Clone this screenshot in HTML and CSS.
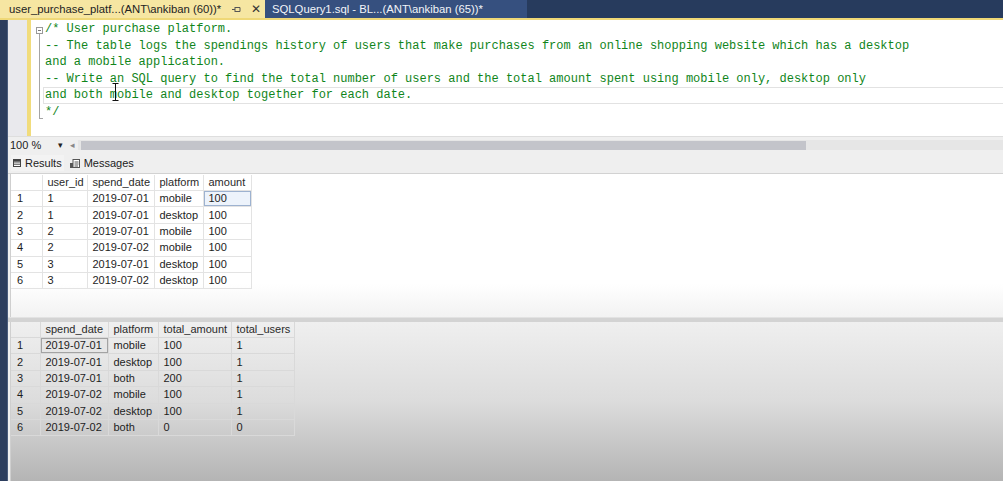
FILE: index.html
```html
<!DOCTYPE html>
<html>
<head>
<meta charset="utf-8">
<link rel="stylesheet" href="styles.css">
</head>
<body>
<div class="tabbar">
  <div class="tab tab-active">
    <span class="tab-title">user_purchase_platf...(ANT\ankiban (60))*</span>
    <svg class="pin" width="9" height="7" viewBox="0 0 9 7"><path d="M0 3.5H3M3 1V6M3 1.5H8V5.5H3" fill="none" stroke="#555" stroke-width="1"/></svg>
    <span class="tab-close">✕</span>
  </div>
  <div class="tab tab-inactive">SQLQuery1.sql - BL...(ANT\ankiban (65))*</div>
</div>
<div class="accent"></div>
<div class="workspace">
  <div class="strip"></div>
  <div class="main">
    <div class="editor">
      <div class="gutter"></div>
      <div class="changes"></div>
      <div class="fold">
        <div class="fold-box"></div>
        <div class="fold-line"></div>
      </div>
      <div class="code">
        <div class="line">/* User purchase platform.</div>
        <div class="line">-- The table logs the spendings history of users that make purchases from an online shopping website which has a desktop</div>
        <div class="line">and a mobile application.</div>
        <div class="line">-- Write an SQL query to find the total number of users and the total amount spent using mobile only, desktop only</div>
        <div class="line current">and both mobile and desktop together for each date.</div>
        <div class="line">*/</div>
      </div>
      <svg class="ibeam" width="7" height="18" viewBox="0 0 7 18"><path d="M0.5 0.5H6.5M3.5 0.5V17.5M0.5 17.5H6.5" fill="none" stroke="#111" stroke-width="1"/></svg>
    </div>
    <div class="zoombar">
      <span class="zoom-value">100 %</span>
      <span class="zoom-drop">▾</span>
      <span class="scroll-left">◂</span>
      <div class="hscroll"><div class="hthumb"></div></div>
    </div>
    <div class="restabs">
      <div class="restab selected">
        <svg width="8" height="8" viewBox="0 0 8 8"><rect x="0.5" y="0.5" width="7" height="7" fill="#fff" stroke="#444"/><path d="M0.5 3H7.5M0.5 5.2H7.5" stroke="#444"/><rect x="0.5" y="0.5" width="7" height="2" fill="#444"/></svg>
        <span>Results</span>
      </div>
      <div class="restab">
        <svg width="10" height="9" viewBox="0 0 10 9"><rect x="3" y="0.5" width="6.5" height="8" fill="#fff" stroke="#555"/><path d="M4.5 3H8.5M4.5 5H8.5M4.5 7H8" stroke="#555"/><rect x="0" y="4" width="3" height="5" fill="#555"/></svg>
        <span>Messages</span>
      </div>
    </div>
    <div class="pane pane-top">
      <table class="grid grid-one">
        <colgroup><col class="c-num"><col style="width:45px"><col style="width:67px"><col style="width:49px"><col style="width:48px"></colgroup>
        <tr><th></th><th>user_id</th><th>spend_date</th><th>platform</th><th>amount</th></tr>
        <tr><td>1</td><td>1</td><td>2019-07-01</td><td>mobile</td><td class="sel">100</td></tr>
        <tr><td>2</td><td>1</td><td>2019-07-01</td><td>desktop</td><td>100</td></tr>
        <tr><td>3</td><td>2</td><td>2019-07-01</td><td>mobile</td><td>100</td></tr>
        <tr><td>4</td><td>2</td><td>2019-07-02</td><td>mobile</td><td>100</td></tr>
        <tr><td>5</td><td>3</td><td>2019-07-01</td><td>desktop</td><td>100</td></tr>
        <tr><td>6</td><td>3</td><td>2019-07-02</td><td>desktop</td><td>100</td></tr>
      </table>
    </div>
    <div class="splitter"></div>
    <div class="pane pane-bottom">
      <table class="grid grid-two">
        <colgroup><col style="width:29px"><col style="width:68px"><col style="width:50px"><col style="width:73px"><col style="width:63px"></colgroup>
        <tr><th></th><th>spend_date</th><th>platform</th><th>total_amount</th><th>total_users</th></tr>
        <tr><td>1</td><td class="sel2">2019-07-01</td><td>mobile</td><td>100</td><td>1</td></tr>
        <tr><td>2</td><td>2019-07-01</td><td>desktop</td><td>100</td><td>1</td></tr>
        <tr><td>3</td><td>2019-07-01</td><td>both</td><td>200</td><td>1</td></tr>
        <tr><td>4</td><td>2019-07-02</td><td>mobile</td><td>100</td><td>1</td></tr>
        <tr><td>5</td><td>2019-07-02</td><td>desktop</td><td>100</td><td>1</td></tr>
        <tr><td>6</td><td>2019-07-02</td><td>both</td><td>0</td><td>0</td></tr>
      </table>
    </div>
  </div>
</div>
</body>
</html>
```

FILE: styles.css
```css
html, body {
  margin: 0;
  padding: 0;
}
body {
  width: 1003px;
  height: 481px;
  overflow: hidden;
  background: #efefef;
  font-family: "Liberation Sans", Arial, sans-serif;
}

/* document tabs */
.tabbar {
  height: 18px;
  display: flex;
  background: #273b5d;
}
.tab {
  display: flex;
  align-items: center;
  box-sizing: border-box;
  font-size: 11.3px;
  white-space: nowrap;
}
.tab-active {
  width: 265px;
  background: #f6e6a2;
  color: #222;
  padding-left: 9px;
  padding-right: 4px;
}
.tab-title {
  flex: 1;
}
.pin {
  margin-right: 10px;
}
.tab-close {
  font-size: 12px;
  color: #333;
}
.tab-inactive {
  width: 262px;
  background: #36507f;
  color: #f2f4f8;
  padding-left: 7px;
}
.accent {
  height: 2px;
  background: #efd877;
}

/* workspace */
.workspace {
  display: flex;
  height: 461px;
}
.strip {
  width: 8px;
  flex: none;
  background: #2c3d5d;
  box-shadow: inset -1px 0 0 #4a5c7c;
}
.main {
  flex: 1;
  min-width: 0;
  display: flex;
  flex-direction: column;
}

/* editor */
.editor {
  height: 116px;
  flex: none;
  display: flex;
  background: #fff;
  position: relative;
  overflow: hidden;
}
.gutter {
  width: 19px;
  flex: none;
  background: #e9e9ed;
}
.changes {
  width: 4px;
  flex: none;
  background: #f1dc7c;
}
.fold {
  width: 12px;
  flex: none;
  display: flex;
  flex-direction: column;
  padding-top: 7px;
  box-sizing: border-box;
}
.fold-box {
  width: 5px;
  height: 5px;
  margin-left: 5px;
  border: 1px solid #9a9a9a;
  background: linear-gradient(#777, #777) center / 3px 1px no-repeat;
}
.fold-line {
  width: 3px;
  height: 84px;
  margin-left: 8px;
  border-left: 1px solid #a5a5a5;
  border-bottom: 1px solid #a5a5a5;
}
.code {
  flex: 1;
  min-width: 0;
  padding-top: 1px;
  font-family: "Liberation Mono", "Courier New", monospace;
  font-size: 12px;
  line-height: 16.5px;
  color: #10851a;
}
.line {
  padding-left: 2px;
  white-space: pre;
  height: 16.5px;
}
.line.current {
  box-shadow: inset 0 1px 0 #e2e2e2, inset 0 -1px 0 #e2e2e2, inset 1px 0 0 #e2e2e2;
}
.ibeam {
  position: absolute;
  left: 104px;
  top: 63px;
}

/* zoom bar */
.zoombar {
  height: 17px;
  flex: none;
  display: flex;
  align-items: center;
  background: #efefef;
  border-top: 1px solid #dedede;
  box-sizing: border-box;
  font-size: 11px;
  color: #222;
}
.zoom-value {
  padding-left: 2px;
  width: 48px;
}
.zoom-drop {
  font-size: 9px;
  width: 12px;
}
.scroll-left {
  font-size: 9px;
  color: #888;
  width: 8px;
}
.hscroll {
  flex: 1;
  height: 10px;
  background: #e6e6e6;
  display: flex;
  align-items: center;
}
.hthumb {
  width: 725px;
  height: 9px;
  margin-left: 3px;
  background: #c3c4ca;
}

/* result tabs */
.restabs {
  height: 21px;
  flex: none;
  display: flex;
  align-items: center;
  gap: 4px;
  padding-left: 3px;
  border-bottom: 1px solid #d2d2d2;
  box-sizing: border-box;
  background: #efefef;
  font-size: 11px;
  color: #222;
}
.restab {
  display: flex;
  align-items: center;
  gap: 4px;
  padding: 2px 2px;
}
.restab.selected {
  background: #f3f3f3;
}

/* grids */
.pane {
  margin-left: 2px;
  border-left: 1px solid #cfcfcf;
}
.pane-top {
  height: 143px;
  flex: none;
  padding-top: 1px;
  box-sizing: border-box;
  background: linear-gradient(#ffffff 0, #ffffff 110px, #f2f2f2 143px);
}
.splitter {
  height: 5px;
  flex: none;
  background: #d3d3d3;
  border-top: 1px solid #e2e2e2;
  box-sizing: border-box;
}
.pane-bottom {
  flex: 1;
  background: linear-gradient(#efefef, #dcdcdc 50%, #b4b4b4);
}
.grid {
  border-collapse: collapse;
  table-layout: fixed;
  font-size: 11px;
  color: #1d1d1d;
}
.grid-one {
  width: 240px;
}
.grid-two {
  width: 283px;
}
.c-num {
  width: 31px;
}
.grid th,
.grid td {
  height: 15.4px;
  padding: 0 0 0 5px;
  border: 1px solid #e3e3e3;
  font-weight: normal;
  text-align: left;
  white-space: nowrap;
  overflow: hidden;
  line-height: 13px;
}
.grid th {
  height: 15px;
  color: #2a2a2a;
}
.grid tr > :first-child {
  border-left: none;
  padding-left: 6px;
}
.grid tr:first-child > * {
  border-top: none;
}
.grid-two th,
.grid-two td {
  border-color: #d9d9d9;
}
.sel {
  background: #edf3fb;
  box-shadow: inset 0 0 0 1px #9db2d0;
}
.sel2 {
  background: #e6e6e6;
  box-shadow: inset 0 0 0 1px #a3a3a3;
}
```
